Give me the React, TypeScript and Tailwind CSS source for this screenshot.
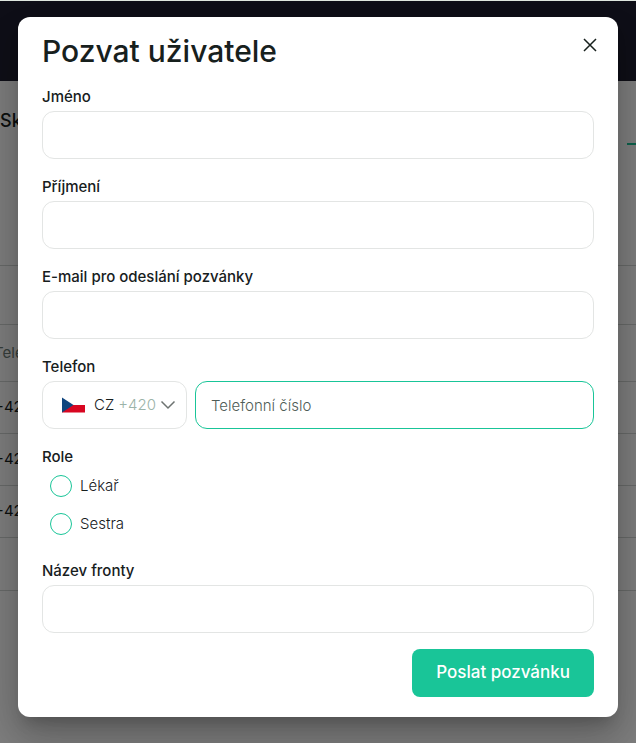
import React from "react";

function Field({ id, label, type = "text" }: { id: string; label: string; type?: string }) {
  return (
    <div className="flex flex-col gap-0.5">
      <label htmlFor={id} className="text-[15px] leading-6 font-medium">
        {label}
      </label>
      <input
        id={id}
        type={type}
        className="h-12 w-full rounded-xl border border-[#e3e5e4] bg-white px-4 outline-none"
      />
    </div>
  );
}

function RoleOption({ value, label }: { value: string; label: string }) {
  return (
    <label className="flex h-[30px] items-center gap-2 text-[15px] font-light">
      <input
        type="radio"
        name="role"
        value={value}
        className="size-[22px] appearance-none rounded-full border border-[#19c598] checked:border-[6px]"
      />
      {label}
    </label>
  );
}

function CzechFlag() {
  return (
    <svg viewBox="0 0 23 16" className="h-4 w-[23px]">
      <rect width="23" height="8" fill="#fff" />
      <rect y="8" width="23" height="7.5" fill="#d80621" />
      <path d="M0 .5 11.5 8 0 15.5z" fill="#10457e" />
    </svg>
  );
}

function PhoneField() {
  return (
    <div className="flex flex-col gap-0.5">
      <label htmlFor="phone" className="text-[15px] leading-6 font-medium">
        Telefon
      </label>
      <div className="flex gap-2">
        <div className="relative w-[145px] shrink-0">
          <select
            aria-label="Předvolba"
            className="h-12 w-full appearance-none rounded-xl border border-[#e3e5e4] bg-white pl-[51px] text-[15px] font-light outline-none"
          >
            <option>CZ</option>
          </select>
          <div className="pointer-events-none absolute inset-0 flex items-center justify-between pr-[11px] pl-5">
            <CzechFlag />
            <div className="flex items-center gap-1 text-[15px] font-light text-[#9bb3a8]">
              +420
              <svg viewBox="0 0 16 16" className="size-4" fill="none" stroke="#6d7371" strokeWidth="1.5">
                <path d="M1.5 4.5 8 11l6.5-6.5" />
              </svg>
            </div>
          </div>
        </div>
        <input
          id="phone"
          type="tel"
          placeholder="Telefonní číslo"
          className="h-12 w-full min-w-0 rounded-xl border border-[#19c598] bg-white px-[15px] text-[15px] font-light outline-none placeholder:text-[#4f5d57]"
        />
      </div>
    </div>
  );
}

function InviteDialog() {
  return (
    <form
      role="dialog"
      aria-labelledby="invite-title"
      className="w-full max-w-[600px] rounded-xl bg-white px-6 pt-3.5 pb-5 text-[#17201d] shadow-[0_11px_15px_-7px_rgba(0,0,0,0.2),0_24px_38px_3px_rgba(0,0,0,0.14),0_9px_46px_8px_rgba(0,0,0,0.12)]"
    >
      <div className="mb-3.5 flex items-start justify-between">
        <h1 id="invite-title" className="text-3xl leading-10 font-medium">
          Pozvat uživatele
        </h1>
        <button type="button" aria-label="Zavřít" className="-mr-2.5 p-1">
          <svg viewBox="0 0 20 20" className="size-5" fill="none" stroke="#17201d" strokeWidth="1.5">
            <path d="M4 4l12 12M16 4 4 16" />
          </svg>
        </button>
      </div>
      <div className="flex flex-col gap-4">
        <Field id="first-name" label="Jméno" />
        <Field id="last-name" label="Příjmení" />
        <Field id="email" label="E-mail pro odeslání pozvánky" type="email" />
        <PhoneField />
        <fieldset className="pb-1">
          <legend className="mb-0.5 text-[15px] leading-6 font-medium">Role</legend>
          <div className="flex flex-col gap-2 pl-2">
            <RoleOption value="doctor" label="Lékař" />
            <RoleOption value="nurse" label="Sestra" />
          </div>
        </fieldset>
        <Field id="queue" label="Název fronty" />
        <button
          type="submit"
          className="h-12 self-end rounded-lg bg-[#19c598] px-6 text-[17px] font-medium text-white"
        >
          Poslat pozvánku
        </button>
      </div>
    </form>
  );
}

function UsersPage() {
  return (
    <div>
      <div className="h-20 bg-[#1f1f30]" />
      <div className="flex h-[185px] items-start justify-between border-b border-[#d3d6d5]">
        <h2 className="pt-[26px] text-lg font-medium">Sk</h2>
        <div className="mt-[62px] h-0.5 w-[9px] bg-[#19c598]" />
      </div>
      <div className="h-[59px] border-b border-[#d3d6d5]" />
      {/* table is scrolled slightly to the right */}
      <div className="overflow-hidden">
        <table className="-ml-1.5 w-[110%] text-left text-[15px]">
          <thead>
            <tr className="h-14 border-b border-[#d3d6d5] text-[#6f7f78]">
              <th className="font-normal">Telefon</th>
            </tr>
          </thead>
          <tbody>
            {["+420", "+420", "+420"].map((phone, i) => (
              <tr key={i} className="h-[52px] border-b border-[#d3d6d5]">
                <td>{phone}</td>
              </tr>
            ))}
          </tbody>
        </table>
      </div>
      <div className="h-[53px] border-b border-[#d3d6d5]" />
    </div>
  );
}

export default function App() {
  return (
    <div className="relative min-h-screen overflow-hidden border-t border-[#dfe7df] bg-white font-['Inter',sans-serif] text-[#17201d]">
      <UsersPage />
      <div className="absolute inset-0 flex items-start justify-center bg-black/50 p-4">
        <InviteDialog />
      </div>
    </div>
  );
}
